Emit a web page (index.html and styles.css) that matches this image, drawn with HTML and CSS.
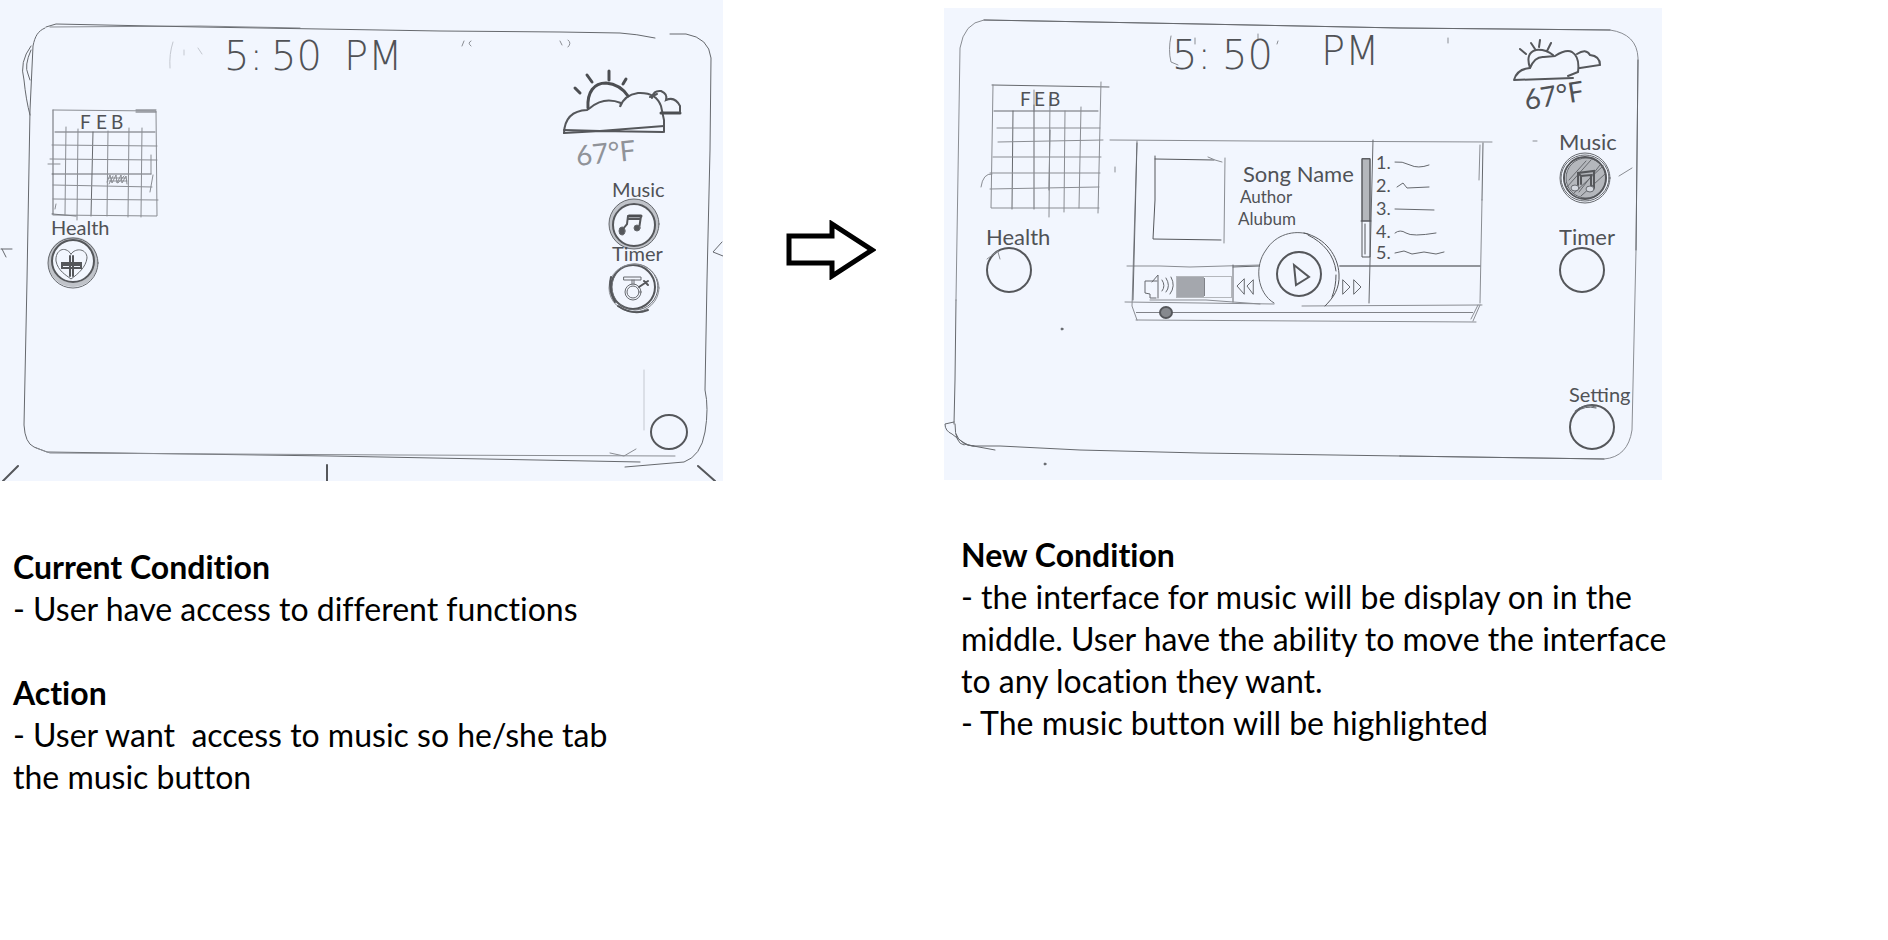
FILE: index.html
```html
<!DOCTYPE html>
<html lang="en">
<head>
<meta charset="utf-8">
<meta name="viewport" content="width=device-width, initial-scale=1">
<title>Music interface storyboard</title>
<link rel="stylesheet" href="styles.css">
</head>
<body>
<main class="board">
  <figure class="sketch sketch-current">
    <svg class="paper" viewBox="0 0 723 481" role="group" aria-label="Current screen">
      <g class="pencil">
        <!-- device outline -->
        <path d="M45 28C38 31 35 36 33 46L30 110 27 280 24 425Q25 443 34 447L47 452 330 456 640 462"/>
        <path class="soft" d="M50 27L200 26 300 28M36 448L50 453 400 455 675 456"/>
        <path d="M46 27L56 24 200 27 440 31 560 32 620 33Q636 34 655 38M670 34H686Q709 38 711 58L710 150 707 280 705 390Q709 408 705 432 701 456 684 462L625 467"/>
        <path d="M31 46Q19 62 24 80 26 100 30 115M31 50Q24 66 28 74L30 80"/>
        <path class="faint" d="M173 42Q169 54 170 68M184 50V55M198 48L202 54M644 370V430"/>
        <path class="soft" d="M610 453L624 456 636 449M464 41L462 46M471 41Q467 43 471 46M560 41L562 45M568 40Q572 43 568 47"/>
        <path d="M1 249H12M2 249L6 257M722 242L713 252 723 256"/>
        <path class="dark" d="M18 466L3 481M327 465V481M698 466L715 481"/>
        <ellipse class="dark" cx="669" cy="432" rx="18" ry="17"/>
        <!-- calendar -->
        <path d="M53 110V214M52 214L76 216M55 132H155M93 132L91 216M52 174H151M136 110H156M136 112H156"/>
        <path class="soft" d="M53 110L156 111 157 216 53 215M66 127L65 215M78 129L77 220M108 131L107 216M129 128L128 217M142 128L141 217M52 145L157 146M50 159L157 160M53 185L152 187M53 199L158 200M48 164H60M151 155V174M153 175L150 192M56 204L55 209"/>
        <path class="soft" d="M107 182L110 175 112 183 116 175 117 183 121 175 122 183 126 176 127 184M109 184L113 176M118 183L124 176M109 178H126M109 181H127"/>
        <!-- sun behind clouds -->
        <path class="dark" d="M564 133Q565 111 587 110L590 108Q604 96 621 103L620 107Q624 95 638 93 656 92 661 106L664 120 664 132"/>
        <path class="heavy" d="M588 108C587 92 594 83 606 83 617 84 624 90 628 96M661 113H680"/>
        <path class="dark" d="M564 130L600 131 664 126M564 133L600 131 663 132M652 98Q653 90 661 91 668 94 666 100 675 96 680 106L680 112M657 94L650 97"/>
        <path class="heavy" d="M587 75L592 82M609 71V80M626 79L623 84M575 88L580 93"/>
      </g>
      <g class="writing">
        <text class="clock" x="224" y="70">5:</text>
        <text class="clock" x="271" y="70">50</text>
        <text class="clock" x="344" y="70">PM</text>
        <text class="month" x="80" y="129">F</text>
        <text class="month" x="96" y="129">E</text>
        <text class="month" x="111" y="129">B</text>
        <text class="degrees pale" x="577" y="166" transform="rotate(-6 577 166)">67°F</text>
      </g>
      <foreignObject x="47" y="218" width="80" height="76">
        <button class="app" type="button"><span>Health</span>
          <svg class="ring" viewBox="0 0 52 52" aria-hidden="true">
            <circle class="halo" cx="26" cy="26" r="23"/><circle class="dark" cx="26" cy="25" r="21"/><circle cx="26" cy="27" r="25"/>
            <path d="M24 18C18 9 8 14 9 25 11 35 19 39 24 43 31 38 39 31 40 22 40 13 29 11 24 18Z"/>
            <path class="dark" d="M23 20V40M26 20V40M15 27H34V32H15ZM15 29H34"/>
          </svg></button>
      </foreignObject>
      <foreignObject x="608" y="180" width="80" height="76">
        <button class="app" type="button"><span>Music</span>
          <svg class="ring" viewBox="0 0 52 52" aria-hidden="true">
            <circle class="halo" cx="26" cy="26" r="23"/><circle class="dark" cx="26" cy="27" r="21"/><circle cx="26" cy="26" r="25"/>
            <path class="heavy" d="M21 18H33"/><path class="dark" d="M20 18L19 26 15 31M33 18L31 31M20 21H32"/>
            <ellipse class="blob" cx="14" cy="33" rx="3" ry="4"/><ellipse class="blob" cx="29" cy="30" rx="3" ry="3"/>
          </svg></button>
      </foreignObject>
      <foreignObject x="608" y="244" width="80" height="76">
        <button class="app" type="button"><span>Timer</span>
          <svg class="ring" viewBox="0 0 52 52" aria-hidden="true">
            <circle class="dark" cx="25" cy="25" r="22"/><circle cx="27" cy="25" r="23"/><ellipse class="soft" cx="26" cy="26" rx="25" ry="24"/>
            <path class="dark" d="M10 44Q25 54 40 48M3 15Q0 28 7 40"/>
            <circle cx="25" cy="30" r="8"/><circle cx="25" cy="30" r="6"/>
            <path d="M16 15H33V18H16ZM24 18V22M26 18V22"/>
            <path class="dark" d="M31 25L40 19M36 19L40 23"/>
          </svg></button>
      </foreignObject>
    </svg>
  </figure>

  <svg class="arrow" viewBox="0 0 90 60" role="img" aria-label="leads to">
    <path d="M3 16H46V4L86 30 46 56V43H3Z"/>
  </svg>

  <figure class="sketch sketch-new">
    <svg class="paper" viewBox="944 8 718 472" role="group" aria-label="New screen">
      <g class="pencil">
        <!-- device outline -->
        <path class="soft" d="M956 300L960 48Q964 23 984 20L1200 24 1400 28 1610 30Q1637 34 1638 58L1636 250 1632 430Q1628 457 1604 459L1400 456"/>
        <path d="M956 300L955 380 954 424M984 20L1200 24 1400 28 1610 30M1638 60L1636 250M1400 456L1604 459M1400 456L1200 453 1080 450 1000 446 972 446 964 444M955 424Q955 444 964 445M954 422L945 424Q945 431 952 434 962 442 968 445L995 450M956 434Q960 445 974 446"/>
        <path class="soft" d="M1171 36Q1168 50 1171 62L1178 65M1195 38V44M1258 34V40M1278 41L1277 44M1448 38V43M1619 176L1632 168M1115 167V172"/>
        <circle class="blob" cx="1062" cy="329" r="1"/><circle class="blob" cx="1045" cy="464" r="1"/>
        <!-- calendar -->
        <path d="M992 85L1109 87M994 111H1098M1013 111L1012 209M1034 105V209M1050 130L1049 190"/>
        <path class="soft" d="M993 85L991 208 1099 208M1101 82L1098 213M1034 90V111M1050 96L1049 217M1065 111L1064 212M1081 107L1079 208M997 128H1100M998 142L1103 140M993 157H1101M990 173H1100M990 189L1099 187M981 187Q983 173 992 174"/>
        <!-- weather -->
        <path class="dark" d="M1514 80Q1517 69 1530 68 1535 56 1544 57L1555 56Q1566 49 1572 52 1580 57 1578 72L1568 76M1514 80L1573 78M1530 68Q1525 53 1536 50 1545 49 1553 55M1520 49L1526 54M1531 43L1535 49M1540 40L1539 47M1551 43L1547 51M1577 54Q1586 48 1590 55 1600 56 1600 65L1580 68"/>
        <!-- player window -->
        <path class="soft" d="M1110 140L1254 141 1492 142M1533 141H1537M1137 141L1132 306 1137 320M1127 266H1160L1190 267 1260 265M1338 266H1480M1480 145L1479 180M1482 200L1480 303M1125 302L1200 303 1274 304M1302 306L1482 305M1136 320L1476 322M1480 305L1473 321M1478 305L1471 319"/>
        <path d="M1483 143L1482 200M1137 143L1133 300M1373 140L1369 303M1233 265V302M1233 267L1260 266M1340 266H1480"/>
        <path class="firm" d="M1155 156V200L1153 239 1221 240M1155 159L1214 160"/>
        <path class="soft" d="M1208 157L1215 160 1222 162M1225 158L1224 243"/>
        <!-- playlist scroll bar and track lines -->
        <rect class="shade" x="1362" y="159" width="8" height="62"/>
        <path class="firm" d="M1362 159V257H1370V159ZM1361 221H1371M1365 224V254"/>
        <path d="M1395 162Q1402 161 1410 165T1429 165M1397 187L1403 183 1407 188 1429 187M1395 209L1434 210M1395 233Q1400 229 1406 233T1436 233M1395 253L1404 251 1412 254 1424 252 1436 254 1444 252"/>
      </g>
      <g class="writing">
        <text class="clock" x="1172" y="69">5:</text>
        <text class="clock" x="1222" y="69">50</text>
        <text class="clock" x="1321" y="65">PM</text>
        <text class="month" x="1020" y="106">F</text>
        <text class="month" x="1034" y="106">E</text>
        <text class="month" x="1048" y="106">B</text>
        <text class="degrees" x="1526" y="110" transform="rotate(-9 1526 110)">67°F</text>
        <text class="song" x="1243" y="182">Song Name</text>
        <text class="credit" x="1240" y="203">Author</text>
        <text class="credit" x="1238" y="225">Alubum</text>
        <text class="track" x="1376" y="169">1.</text>
        <text class="track" x="1376" y="192">2.</text>
        <text class="track" x="1376" y="215">3.</text>
        <text class="track" x="1376" y="238">4.</text>
        <text class="track" x="1376" y="259">5.</text>
      </g>
      <g class="pencil">
        <path d="M1157 281H1145V293L1150 294 1150 298 1156 298M1152 282L1158 275V298"/>
        <path d="M1162 280Q1166 286 1162 291M1166 278Q1171 286 1166 292M1171 277Q1176 286 1170 294"/>
        <path class="soft" d="M1150 300L1206 300 1260 304"/>
      </g>
      <foreignObject x="1176" y="276" width="56" height="22">
        <input class="volume" type="range" min="0" max="100" value="50" aria-label="Volume">
      </foreignObject>
      <foreignObject x="1235" y="277" width="24" height="20">
        <button class="transport" type="button" aria-label="Previous">
          <svg viewBox="0 0 24 20" aria-hidden="true"><path d="M9 2L2 9 9 17ZM18 3L12 9 18 17Z"/></svg>
        </button>
      </foreignObject>
      <foreignObject x="1340" y="277" width="24" height="20">
        <button class="transport" type="button" aria-label="Next">
          <svg viewBox="0 0 24 20" aria-hidden="true"><path d="M3 3L10 10 3 17ZM14 3L21 10 14 17Z"/></svg>
        </button>
      </foreignObject>
      <foreignObject x="1256" y="231" width="86" height="76">
        <button class="transport" type="button" aria-label="Play">
          <svg viewBox="0 0 86 76" aria-hidden="true">
            <path class="paper-fill" d="M18 72A40 41 0 1 1 69 72Z"/>
            <path d="M18 72C1 62-2 35 10 19 20 3 38-1 52 3"/>
            <path class="firm" d="M48 2C70 7 82 25 83 43 84 58 77 67 69 75M52 4C68 12 78 24 80 40M80 44Q80 56 76 66"/>
            <circle class="dark" cx="43" cy="43" r="22"/>
            <path class="dark" d="M38 34L53 46 40 54Z"/>
          </svg>
        </button>
      </foreignObject>
      <foreignObject x="1136" y="305" width="337" height="15">
        <input class="seek" type="range" min="0" max="100" value="7" aria-label="Song position">
      </foreignObject>
      <foreignObject x="986" y="227" width="90" height="74">
        <button class="app app-plain" type="button"><span>Health</span>
          <svg class="ring" viewBox="0 0 46 46" aria-hidden="true"><circle class="dark" cx="23" cy="23" r="22"/><path class="soft" d="M1 12L12 4M12 5L14 12"/></svg></button>
      </foreignObject>
      <foreignObject x="1559" y="132" width="90" height="74">
        <button class="app app-on" type="button" aria-pressed="true"><span>Music</span>
          <svg class="ring" viewBox="0 0 52 52" aria-hidden="true">
            <circle class="shade" cx="27" cy="26" r="20"/><circle class="dark" cx="26" cy="26" r="21"/><circle cx="26" cy="26" r="25"/><ellipse cx="26" cy="26" rx="24" ry="23"/>
            <path d="M8 35L32 8M14 42L44 14M22 44L46 22M10 28L27 9M20 40L41 13"/>
            <path class="dark" d="M19 33V21L35 19V36M22 32V24L32 23V34M19 21L22 24"/>
            <ellipse class="note" cx="16" cy="36" rx="4" ry="3"/><ellipse class="note" cx="31" cy="37" rx="4" ry="3"/>
          </svg></button>
      </foreignObject>
      <foreignObject x="1559" y="227" width="90" height="74">
        <button class="app app-plain" type="button"><span>Timer</span>
          <svg class="ring" viewBox="0 0 46 46" aria-hidden="true"><circle class="dark" cx="23" cy="23" r="22"/></svg></button>
      </foreignObject>
      <foreignObject x="1569" y="384" width="90" height="74">
        <button class="app app-plain" type="button"><span class="tight">Setting</span>
          <svg class="ring" viewBox="0 0 46 46" aria-hidden="true"><circle class="dark" cx="23" cy="23" r="22"/><path d="M6 7Q15-1 27 3M7 8Q16 1 27 4"/></svg></button>
      </foreignObject>
    </svg>
  </figure>

  <section class="notes notes-current">
    <h2>Current Condition</h2>
    <p>- User have access to different functions</p>
    <h2 class="next">Action</h2>
    <p>- User want&nbsp; access to music so he/she tab the music button</p>
  </section>

  <section class="notes notes-new">
    <h2>New Condition</h2>
    <p>- the interface for music will be display on in the middle. User have the ability to move the interface to any location they want.</p>
    <p>- The music button will be highlighted</p>
  </section>
</main>
</body>
</html>
```
FILE: styles.css
```css
* {
  box-sizing: border-box;
}

body {
  margin: 0;
  background: #fff;
  color: #000;
  font-family: Lato, "Liberation Sans", sans-serif;
  font-variant-ligatures: none;
}

.board {
  display: grid;
  grid-template-columns: 723fr 221fr 718fr 226fr;
  align-items: start;
}

.sketch {
  margin: 0;
}

.sketch-new {
  padding-top: 8px;
}

.paper {
  display: block;
  width: 100%;
  background: #f2f6fe;
}

.arrow {
  width: 90px;
  margin-top: 220px;
  margin-right: 6px;
  justify-self: center;
  fill: none;
  stroke: #000;
  stroke-width: 5;
}

/* pencil strokes */
.pencil,
.ring,
.transport svg {
  overflow: visible;
  fill: none;
  stroke: #66696e;
  stroke-width: 1;
  stroke-linecap: round;
}

.soft {
  stroke: #8a8d93;
}

.faint {
  stroke: #c4c8d0;
}

.firm {
  stroke: #55575b;
}

.dark {
  stroke: #55575b;
  stroke-width: 2;
}

.heavy {
  stroke: #4c4e52;
  stroke-width: 3;
}

.halo {
  stroke: #c0c3c9;
  stroke-width: 4;
}

.blob {
  fill: #55575b;
}

.shade {
  fill: #b4b7bc;
}

.note {
  fill: #d4d8df;
}

.paper-fill {
  fill: #f2f6fe;
  stroke: none;
}

/* handwriting */
.writing {
  fill: #505256;
}

.clock {
  font: 200 40px "DejaVu Sans", sans-serif;
}

.month {
  font-size: 19px;
}

.degrees {
  font-size: 28px;
}

.pale {
  fill: #909399;
}

.song {
  font-size: 22px;
}

.credit {
  font-size: 17px;
}

.track {
  font-size: 18px;
}

/* controls inside the sketches */
.app,
.transport {
  display: flex;
  padding: 0;
  border: 0;
  background: none;
  color: #505256;
  font-family: inherit;
}

.app {
  flex-direction: column;
  align-items: flex-start;
  font-size: 20px;
  line-height: 18px;
}

.app span {
  padding-left: 4px;
}

.app-plain,
.app-on {
  font-size: 22px;
  line-height: 20px;
}

.app-plain span,
.app-on span {
  padding-left: 0;
}

.app .tight {
  font-size: 20px;
}

.ring {
  width: 52px;
  height: 52px;
}

.app-plain .ring {
  width: 46px;
  height: 46px;
}

.transport,
.transport svg {
  width: 100%;
  height: 100%;
}

.volume,
.seek {
  appearance: none;
  display: block;
  width: 100%;
  height: 100%;
  margin: 0;
  background: none;
}

.volume {
  border: 1px solid #b4b7bc;
  background: linear-gradient(to right, #a4a7ad 50%, transparent 50%);
}

.volume::-webkit-slider-thumb {
  appearance: none;
  width: 1px;
  height: 18px;
  background: #808288;
}

.seek::-webkit-slider-runnable-track {
  height: 1px;
  background: #808288;
}

.seek::-webkit-slider-thumb {
  appearance: none;
  width: 14px;
  height: 13px;
  margin-top: -6px;
  border: 2px solid #55575b;
  border-radius: 50%;
  background: #86898e;
}

/* captions */
.notes {
  font-size: 32px;
  line-height: 42px;
}

.notes h2,
.notes p {
  margin: 0;
  font-size: inherit;
}

.notes .next {
  margin-top: 42px;
}

.notes-current {
  grid-column: 1;
  grid-row: 2;
  max-width: 640px;
  padding: 65px 0 0 13px;
}

.notes-new {
  grid-column: 3 / 5;
  grid-row: 2;
  max-width: 750px;
  padding: 53px 0 0 17px;
}
```
